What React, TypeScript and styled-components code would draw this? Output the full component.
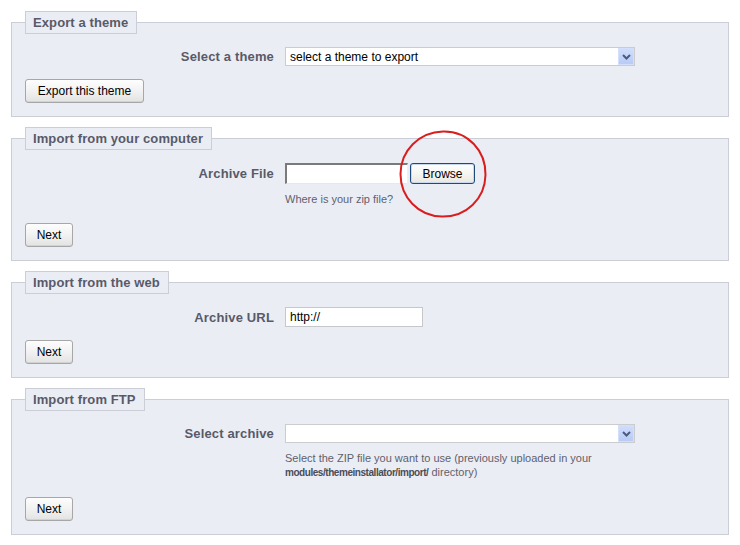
import React from "react";
import styled, { createGlobalStyle } from "styled-components";

const GlobalStyle = createGlobalStyle`
  html, body { margin: 0; padding: 0; background: #ffffff; }
  body {
    font-family: "Liberation Sans", Arial, sans-serif;
    font-size: 12px;
    color: #000;
  }
`;

const Page = styled.div`
  padding: 11px 0 10px 11px;
  display: flex;
  flex-direction: column;
  gap: 10px;
`;

const Fieldset = styled.fieldset`
  box-sizing: border-box;
  width: 718px;
  min-inline-size: auto;
  margin: 0;
  padding: 13px 13px 13px;
  background: #ebedf4;
  border: 1px solid #ccced7;
`;

const Legend = styled.legend`
  margin: 0;
  padding: 3px 8px 3px 7px;
  background: #ebedf4;
  border: 1px solid #ccced7;
  font-weight: bold;
  font-size: 13px;
  line-height: 15px;
  letter-spacing: 0.1px;
  color: #585a69;
`;

const FormRow = styled.div`
  display: grid;
  grid-template-columns: 249px auto;
  column-gap: 11px;
  justify-content: start;
  align-items: center;
`;

const Label = styled.label`
  grid-column: 1;
  grid-row: 1;
  text-align: right;
  font-weight: bold;
  font-size: 13px;
  line-height: 15px;
  letter-spacing: 0.15px;
  color: #585a69;
`;

const Control = styled.div`
  grid-column: 2;
  grid-row: 1;
  display: flex;
  align-items: center;
  position: relative;
`;

const Help = styled.p`
  grid-column: 2;
  grid-row: 2;
  margin: 8px 0 4px;
  font-size: 11px;
  line-height: 14px;
  color: #5f616e;
  b {
    color: #4a4c58;
    font-size: 10px;
    letter-spacing: -0.45px;
  }
`;

const Actions = styled.div`
  margin-top: 13px;
  display: flex;
`;

const Button = styled.button<{ $w: number }>`
  box-sizing: border-box;
  width: ${(p) => p.$w}px;
  height: 24px;
  padding: 0;
  font-family: "Liberation Sans", Arial, sans-serif;
  font-size: 12px;
  color: #000;
  border: 1px solid #a7a7a7;
  border-radius: 3px;
  background: linear-gradient(#fdfdfd 0%, #f3f3f3 45%, #e3e3e3 100%);
  box-shadow: inset 0 -1px 0 #d2d2d2;
  cursor: pointer;
`;

const SelectWrap = styled.div<{ $w: number }>`
  position: relative;
  width: ${(p) => p.$w}px;
  height: 19px;
`;

const Select = styled.select`
  box-sizing: border-box;
  appearance: none;
  width: 100%;
  height: 100%;
  margin: 0;
  padding: 0 0 0 4px;
  border: 1px solid #cbccce;
  border-radius: 0;
  background: #fff;
  font-family: "Liberation Sans", Arial, sans-serif;
  font-size: 12px;
  color: #000;
  outline: none;
`;

const ArrowBox = styled.span`
  position: absolute;
  top: 1px;
  right: 1px;
  width: 16px;
  height: 17px;
  box-sizing: border-box;
  border: 1px solid #d4e0fb;
  background: linear-gradient(#d0ddfb, #b8cbf6);
  display: flex;
  align-items: center;
  justify-content: center;
  pointer-events: none;
`;

const FileBox = styled.input`
  box-sizing: border-box;
  width: 123px;
  height: 21px;
  margin: 0 2px 0 0;
  padding: 0 3px;
  background: #fff;
  border-top: 2px solid #7a7a7a;
  border-left: 2px solid #7a7a7a;
  border-right: 1px solid #f0f0f0;
  border-bottom: 1px solid #e8e8e8;
  font-family: "Liberation Sans", Arial, sans-serif;
  font-size: 12px;
  outline: none;
`;

const BrowseButton = styled.button`
  box-sizing: border-box;
  width: 65px;
  height: 21px;
  padding: 0;
  font-family: "Liberation Sans", Arial, sans-serif;
  font-size: 12px;
  color: #000;
  border: 1px solid #1d4a7a;
  border-radius: 3px;
  background: linear-gradient(#ffffff 0%, #f6f5f1 50%, #e9e7df 100%);
  box-shadow: inset 0 0 0 1px #c8d8f0;
  cursor: pointer;
`;

const TextInput = styled.input`
  box-sizing: border-box;
  width: 138px;
  height: 20px;
  margin: 0;
  padding: 0 4px;
  background: #fff;
  border: 1px solid #c6c7ca;
  font-family: "Liberation Sans", Arial, sans-serif;
  font-size: 12px;
  color: #000;
  outline: none;
`;

const RedCircle = styled.svg`
  position: absolute;
  left: 113px;
  top: -34px;
  width: 90px;
  height: 90px;
  pointer-events: none;
  overflow: visible;
`;

const Arrow = () => (
  <ArrowBox>
    <svg width="9" height="6" viewBox="0 0 9 6">
      <polyline points="1,1 4.5,4.5 8,1" fill="none" stroke="#4a5a80" strokeWidth="2" />
    </svg>
  </ArrowBox>
);

export default function App() {
  return (
    <>
      <GlobalStyle />
      <Page>
        <Fieldset>
          <Legend>Export a theme</Legend>
          <FormRow>
            <Label>Select a theme</Label>
            <Control>
              <SelectWrap $w={350}>
                <Select defaultValue="">
                  <option value="">select a theme to export</option>
                </Select>
                <Arrow />
              </SelectWrap>
            </Control>
          </FormRow>
          <Actions>
            <Button $w={119}>Export this theme</Button>
          </Actions>
        </Fieldset>

        <Fieldset>
          <Legend>Import from your computer</Legend>
          <FormRow>
            <Label>Archive File</Label>
            <Control>
              <FileBox type="text" readOnly />
              <BrowseButton>Browse</BrowseButton>
              <RedCircle viewBox="0 0 90 90">
                <path
                  d="M45 2.5 C70 2 88 22 87.5 46 C87 70 68 88 44 87.5 C20 87 2.5 68 2.5 45 C2.5 22 21 3 45 2.5 Z"
                  fill="none"
                  stroke="#d81e1e"
                  strokeWidth="2"
                />
              </RedCircle>
            </Control>
            <Help>Where is your zip file?</Help>
          </FormRow>
          <Actions>
            <Button $w={48}>Next</Button>
          </Actions>
        </Fieldset>

        <Fieldset>
          <Legend>Import from the web</Legend>
          <FormRow>
            <Label>Archive URL</Label>
            <Control>
              <TextInput type="text" defaultValue="http://" />
            </Control>
          </FormRow>
          <Actions>
            <Button $w={48}>Next</Button>
          </Actions>
        </Fieldset>

        <Fieldset>
          <Legend>Import from FTP</Legend>
          <FormRow>
            <Label>Select archive</Label>
            <Control>
              <SelectWrap $w={350}>
                <Select defaultValue="">
                  <option value=""></option>
                </Select>
                <Arrow />
              </SelectWrap>
            </Control>
            <Help>
              Select the ZIP file you want to use (previously uploaded in your
              <br />
              <b>modules/themeinstallator/import/</b> directory)
            </Help>
          </FormRow>
          <Actions>
            <Button $w={48}>Next</Button>
          </Actions>
        </Fieldset>
      </Page>
    </>
  );
}
